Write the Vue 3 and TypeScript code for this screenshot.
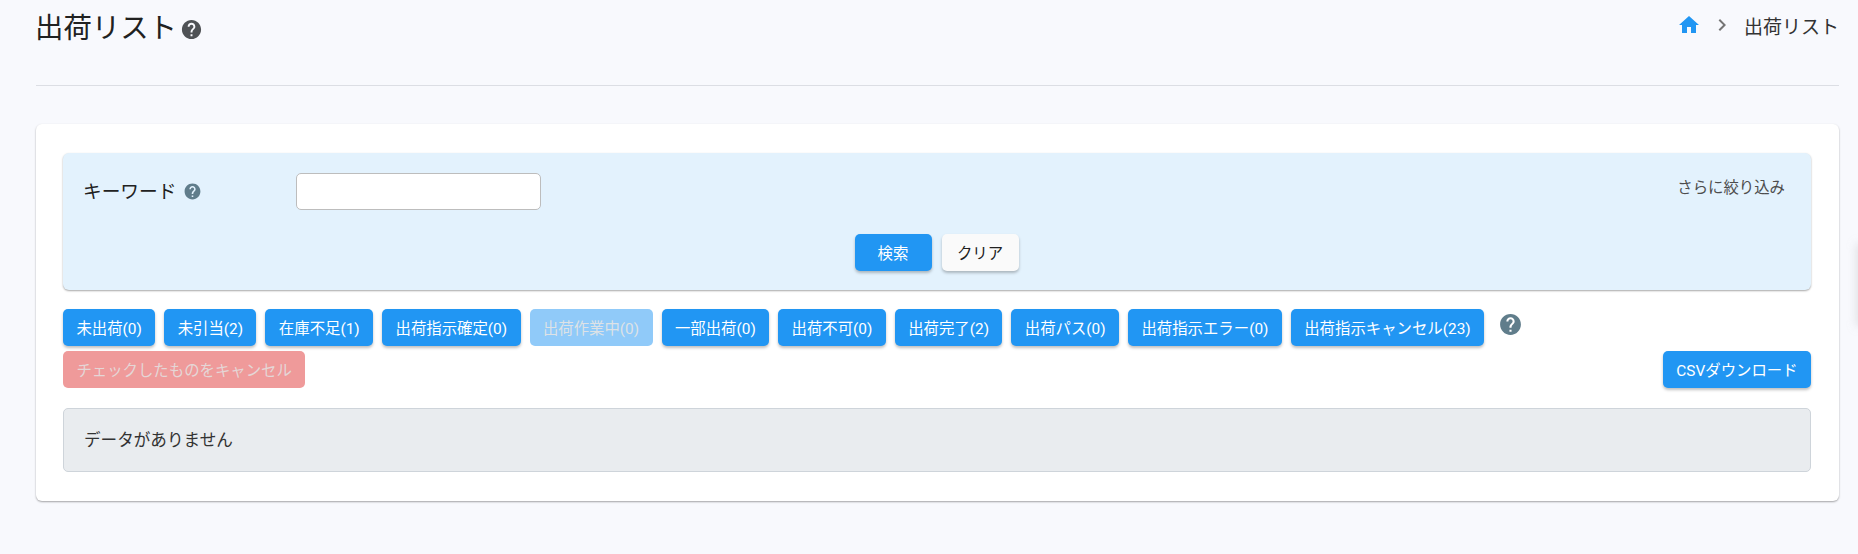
<script setup lang="ts">
interface StatusButton {
  label: string
  disabled?: boolean
}

const statuses: StatusButton[] = [
  { label: '未出荷(0)' },
  { label: '未引当(2)' },
  { label: '在庫不足(1)' },
  { label: '出荷指示確定(0)' },
  { label: '出荷作業中(0)', disabled: true },
  { label: '一部出荷(0)' },
  { label: '出荷不可(0)' },
  { label: '出荷完了(2)' },
  { label: '出荷パス(0)' },
  { label: '出荷指示エラー(0)' },
  { label: '出荷指示キャンセル(23)' },
]
</script>

<template>
  <div class="page">
    <header class="head">
      <div class="title-wrap">
        <h1 class="title">出荷リスト</h1>
        <svg class="help help-title" viewBox="0 0 24 24"><path d="M12 2C6.48 2 2 6.48 2 12s4.48 10 10 10 10-4.48 10-10S17.52 2 12 2zm1 17h-2v-2h2v2zm2.07-7.75l-.9.92C13.45 12.9 13 13.5 13 15h-2v-.5c0-1.1.45-2.1 1.17-2.83l1.24-1.26c.37-.36.59-.86.59-1.41 0-1.1-.9-2-2-2s-2 .9-2 2H8c0-2.21 1.79-4 4-4s4 1.79 4 4c0 .88-.36 1.68-.93 2.25z"/></svg>
      </div>
      <nav class="crumbs">
        <svg class="home" viewBox="0 0 24 24"><path d="M10 20v-6h4v6h5v-8h3L12 3 2 12h3v8z"/></svg>
        <svg class="chev" viewBox="0 0 24 24"><path d="M10 6L8.59 7.41 13.17 12l-4.58 4.59L10 18l6-6z"/></svg>
        <span class="crumb-text">出荷リスト</span>
      </nav>
    </header>

    <section class="card">
      <div class="search">
        <div class="search-top">
          <div class="kw-label">
            <span class="kw-text">キーワード</span>
            <svg class="help help-kw" viewBox="0 0 24 24"><path d="M12 2C6.48 2 2 6.48 2 12s4.48 10 10 10 10-4.48 10-10S17.52 2 12 2zm1 17h-2v-2h2v2zm2.07-7.75l-.9.92C13.45 12.9 13 13.5 13 15h-2v-.5c0-1.1.45-2.1 1.17-2.83l1.24-1.26c.37-.36.59-.86.59-1.41 0-1.1-.9-2-2-2s-2 .9-2 2H8c0-2.21 1.79-4 4-4s4 1.79 4 4c0 .88-.36 1.68-.93 2.25z"/></svg>
          </div>
          <input class="kw-input" type="text" />
          <span class="more">さらに絞り込み</span>
        </div>
        <div class="search-actions">
          <button class="btn primary search-btn" type="button">検索</button>
          <button class="btn light search-btn" type="button">クリア</button>
        </div>
      </div>

      <div class="status-row">
        <button
          v-for="s in statuses"
          :key="s.label"
          class="btn primary status"
          :class="{ off: s.disabled }"
          type="button"
        >{{ s.label }}</button>
        <svg class="help help-status" viewBox="0 0 24 24"><path d="M12 2C6.48 2 2 6.48 2 12s4.48 10 10 10 10-4.48 10-10S17.52 2 12 2zm1 17h-2v-2h2v2zm2.07-7.75l-.9.92C13.45 12.9 13 13.5 13 15h-2v-.5c0-1.1.45-2.1 1.17-2.83l1.24-1.26c.37-.36.59-.86.59-1.41 0-1.1-.9-2-2-2s-2 .9-2 2H8c0-2.21 1.79-4 4-4s4 1.79 4 4c0 .88-.36 1.68-.93 2.25z"/></svg>
      </div>

      <div class="action-row">
        <button class="btn danger-off status" type="button">チェックしたものをキャンセル</button>
        <button class="btn primary status" type="button">CSVダウンロード</button>
      </div>

      <div class="alert">データがありません</div>
    </section>
    <div class="edge-shadow"></div>
  </div>
</template>

<style>
html, body {
  margin: 0;
  background: #f8f9fd;
}
</style>

<style scoped>
.page {
  position: relative;
  box-sizing: border-box;
  height: 554px;
  padding: 0 19px 0 36px;
  background: #f8f9fd;
  color: #212529;
  font-family: Roboto, "Noto Sans CJK JP", sans-serif;
  overflow: hidden;
}
.edge-shadow {
  position: absolute;
  top: 245px;
  right: -6px;
  width: 6px;
  height: 80px;
  border-radius: 4px;
  background: #e2e3e6;
  box-shadow: 0 0 8px 2px rgba(205, 206, 210, 0.55);
}
.head {
  display: flex;
  justify-content: space-between;
  align-items: flex-start;
  height: 85px;
  border-bottom: 1px solid #dcdee4;
}
.title-wrap {
  display: flex;
  align-items: center;
  height: 58px;
}
.title {
  margin: 0 0 0 -1px;
  font-size: 28.4px;
  font-weight: 400;
  line-height: 58px;
  color: #212121;
}
.help { display: block; fill: #607d8b; }
.help-title { width: 23px; height: 23px; margin-left: 3px; fill: #4f5255; }
.crumbs {
  display: flex;
  align-items: center;
  height: 50px;
}
.home { width: 24px; height: 24px; fill: #2196f3; margin-right: 9px; }
.chev { width: 24px; height: 24px; fill: #757575; margin-right: 10px; }
.crumb-text { font-size: 19px; color: #333; }

.card {
  box-sizing: border-box;
  height: 377px;
  margin-top: 38px;
  padding: 29px 28px 0 27px;
  background: #fff;
  border-radius: 6px;
  box-shadow: 0 1px 2px rgba(0, 0, 0, 0.35);
}
.search {
  box-sizing: border-box;
  height: 137px;
  padding: 20px 26px 0 21px;
  background: #e3f2fd;
  border-radius: 6px;
  box-shadow: 0 1px 2px rgba(0, 0, 0, 0.35);
}
.search-top {
  display: flex;
  align-items: flex-start;
}
.kw-label {
  display: flex;
  align-items: center;
  width: 212px;
  height: 36px;
  font-size: 18.7px;
  color: #212121;
}
.kw-text { margin: -3px 0 0 -1px; }
.help-kw { width: 19px; height: 19px; margin-left: 7px; }
.kw-input {
  box-sizing: border-box;
  width: 245px;
  height: 37px;
  padding: 0 10px;
  background: #fff;
  border: 1px solid #bdbdbd;
  border-radius: 5px;
  outline: none;
}
.more {
  margin-left: auto;
  font-size: 15.4px;
  line-height: 30px;
  color: #4d4d4d;
}
.search-actions {
  display: flex;
  justify-content: center;
  gap: 10px;
  margin-top: 24px;
  padding-left: 4px;
}
.btn {
  box-sizing: border-box;
  height: 37px;
  padding-bottom: 2px;
  border: 0;
  border-radius: 5px;
  font-family: inherit;
  font-size: 15.4px;
  box-shadow: 0 2px 3px rgba(0, 0, 0, 0.25);
  cursor: pointer;
}
.primary { background: #2196f3; color: #fff; }
.light { background: #fafafa; color: #212121; }
.search-btn { width: 77px; padding-left: 0; padding-right: 0; }
.status { padding-left: 13.4px; padding-right: 13.4px; }
.off { background: #90caf9; color: #dde2e6; box-shadow: none; }
.danger-off { background: #ef9a9a; color: #e5d6d6; box-shadow: none; }
.status-row {
  display: flex;
  align-items: flex-start;
  gap: 9px;
  margin-top: 19px;
}
.help-status { width: 25px; height: 25px; margin: 3px 0 0 5px; }
.action-row {
  display: flex;
  justify-content: space-between;
  margin-top: 5px;
}
.alert {
  box-sizing: border-box;
  height: 64px;
  margin-top: 20px;
  padding: 0 20px;
  background: #e9ecef;
  border: 1px solid #ced4da;
  border-radius: 5px;
  font-size: 16.6px;
  line-height: 64px;
  color: #333;
}
</style>
